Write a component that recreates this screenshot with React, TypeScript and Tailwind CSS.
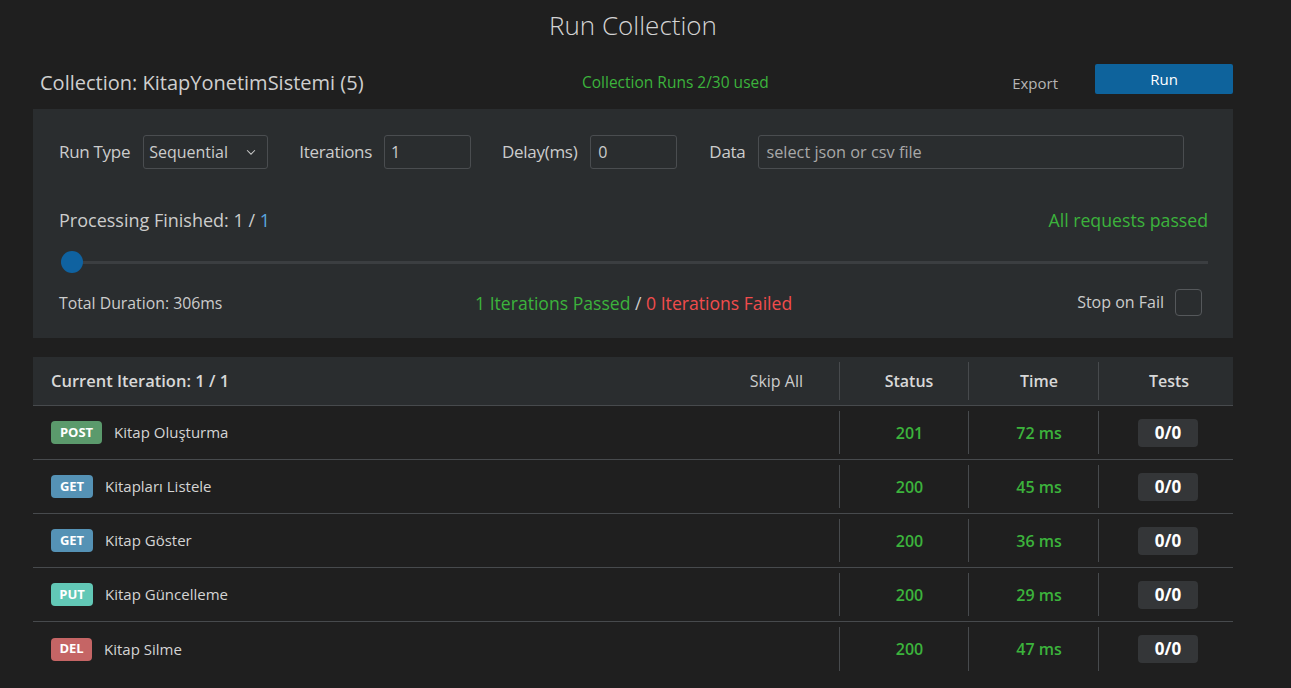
import React from "react";

const rows = [
  { m: "POST", c: "bg-[#5b9a6c]", w: "w-[51px]", name: "Kitap Oluşturma", s: "201", t: "72 ms" },
  { m: "GET", c: "bg-[#5592b5]", w: "w-[42px]", name: "Kitapları Listele", s: "200", t: "45 ms" },
  { m: "GET", c: "bg-[#5592b5]", w: "w-[42px]", name: "Kitap Göster", s: "200", t: "36 ms" },
  { m: "PUT", c: "bg-[#62c8b6]", w: "w-[42px]", name: "Kitap Güncelleme", s: "200", t: "29 ms" },
  { m: "DEL", c: "bg-[#c56565]", w: "w-[41px]", name: "Kitap Silme", s: "200", t: "47 ms" },
];

function Chevron() {
  return (
    <svg width="14" height="14" viewBox="0 0 16 16" fill="none" stroke="#c8c8c8" strokeWidth="1.2">
      <path d="M3.5 6l4.5 4.5L12.5 6" />
    </svg>
  );
}

export default function App() {
  return (
    <div
      className="w-full h-[688px] overflow-hidden bg-[#1f1f1f] text-[#cccccc]"
      style={{ fontFamily: '"Open Sans", "Noto Sans", sans-serif' }}
    >
      <div className="ml-[33px] w-[1200px]">
        <div className="h-[50px] flex items-center justify-center text-[26px] font-light text-[#d4d4d4]">
          Run Collection
        </div>
        {/* header row */}
        <div className="mt-[14px] h-[30px] flex items-center">
          <div className="w-[549px] pl-[7px] pt-[8px] text-[20px] text-[#cfcfcf]">
            Collection: KitapYonetimSistemi (5)
          </div>
          <div className="pt-[8px] text-[15.5px] text-[#3cb33c]">Collection Runs 2/30 used</div>
          <div className="ml-auto pt-[8px] text-[15px] text-[#b5b5b5]">Export</div>
          <button className="ml-[37px] w-[138px] h-[30px] bg-[#0e639c] rounded-[2px] text-white text-[15px]">
            Run
          </button>
        </div>

        {/* settings panel */}
        <div className="mt-[15px] h-[229px] bg-[#2a2d2f] pl-[26px] pr-[25px] pt-[26px] flex flex-col">
          <div className="flex items-center h-[34px] text-[17px] tracking-[-0.3px]">
            <span>Run Type</span>
            <div className="ml-[13px] w-[125px] h-[34px] border border-[#4a4d50] rounded-[3px] flex items-center justify-between pl-[5px] pr-[9px] text-[16px] tracking-normal">
              <span>Sequential</span>
              <Chevron />
            </div>
            <span className="ml-[31px]">Iterations</span>
            <div className="ml-[12px] w-[87px] h-[34px] border border-[#4a4d50] rounded-[3px] flex items-center pl-[6px] text-[16px]">
              1
            </div>
            <span className="ml-[31px]">Delay(ms)</span>
            <div className="ml-[13px] w-[87px] h-[34px] border border-[#4a4d50] rounded-[3px] flex items-center pl-[7px] text-[16px]">
              0
            </div>
            <span className="ml-[32px]">Data</span>
            <div className="ml-[13px] w-[426px] h-[34px] border border-[#4a4d50] rounded-[3px] flex items-center pl-[7px] text-[16.3px] tracking-normal text-[#a8a8a8]">
              select json or csv file
            </div>
          </div>

          <div className="mt-[38px] flex items-center justify-between h-[26px]">
            <div className="text-[18px]">
              Processing Finished: 1 / <span className="text-[#5aa7e0]">1</span>
            </div>
            <div className="text-[17.7px] text-[#3cb33c]">All requests passed</div>
          </div>

          <div className="relative mt-[18px] h-[22px] flex items-center pl-[2px]">
            <div className="w-full h-[3px] bg-[#3b3e41]" />
            <div className="absolute left-[2px] top-0 w-[22px] h-[22px] rounded-full bg-[#0f62a0]" />
          </div>

          <div className="mt-[15px] flex items-center h-[28px]">
            <div className="w-[416px] pt-[3px] text-[15.8px]">Total Duration: 306ms</div>
            <div className="pt-[3px] text-[17.6px]">
              <span className="text-[#3cb33c]">1 Iterations Passed</span>
              <span> / </span>
              <span className="text-[#f14c4c]">0 Iterations Failed</span>
            </div>
            <div className="ml-auto flex items-center mr-[6px]">
              <span className="text-[16px]">Stop on Fail</span>
              <div className="ml-[11px] w-[27px] h-[27px] border border-[#55585b] rounded-[4px]" />
            </div>
          </div>
        </div>

        {/* table */}
        <div className="mt-[19px]">
          <div className="h-[49px] bg-[#2a2d2f] border-b border-[#474a4d] flex">
            <div className="flex-1 flex items-center justify-between pl-[18px] pr-[36px]">
              <span className="text-[16.5px] font-semibold text-[#d8d8d8]">Current Iteration: 1 / 1</span>
              <span className="text-[16px] text-[#cccccc]">Skip All</span>
            </div>
            <div className="w-[129px] py-[5px]">
              <div className="h-full border-l border-[#474a4d] flex items-center justify-center pl-[10px] text-[16px] font-semibold text-[#d8d8d8]">
                Status
              </div>
            </div>
            <div className="w-[130px] py-[5px]">
              <div className="h-full border-l border-[#474a4d] flex items-center justify-center pl-[11px] text-[16px] font-semibold text-[#d8d8d8]">
                Time
              </div>
            </div>
            <div className="w-[135px] py-[5px]">
              <div className="h-full border-l border-[#474a4d] flex items-center justify-center pl-[6px] text-[16px] font-semibold text-[#d8d8d8]">
                Tests
              </div>
            </div>
          </div>
          {rows.map((r, idx) => (
            <div key={idx} className={`h-[54px] flex ${idx < 4 ? "border-b border-[#474a4d]" : ""}`}>
              <div className="flex-1 flex items-center pl-[18px]">
                <span
                  className={`${r.c} ${r.w} h-[23px] rounded-[4px] flex items-center justify-center text-[13px] font-bold text-white`}
                >
                  {r.m}
                </span>
                <span className="ml-[12px] text-[15px] text-[#d4d4d4]">{r.name}</span>
              </div>
              <div className="w-[129px] py-[5px]">
                <div className="h-full border-l border-[#474a4d] flex items-center justify-center pl-[11px] text-[16px] font-semibold text-[#3cb33c]">
                  {r.s}
                </div>
              </div>
              <div className="w-[130px] py-[5px]">
                <div className="h-full border-l border-[#474a4d] flex items-center justify-center pl-[11px] text-[16px] font-semibold text-[#3cb33c]">
                  {r.t}
                </div>
              </div>
              <div className="w-[135px] py-[5px]">
                <div className="h-full border-l border-[#474a4d] flex items-center justify-center pl-[4px]">
                  <span className="w-[60px] h-[28px] rounded-[4px] bg-[#343638] flex items-center justify-center text-[17px] font-bold text-white">
                    0/0
                  </span>
                </div>
              </div>
            </div>
          ))}
        </div>
      </div>
    </div>
  );
}
